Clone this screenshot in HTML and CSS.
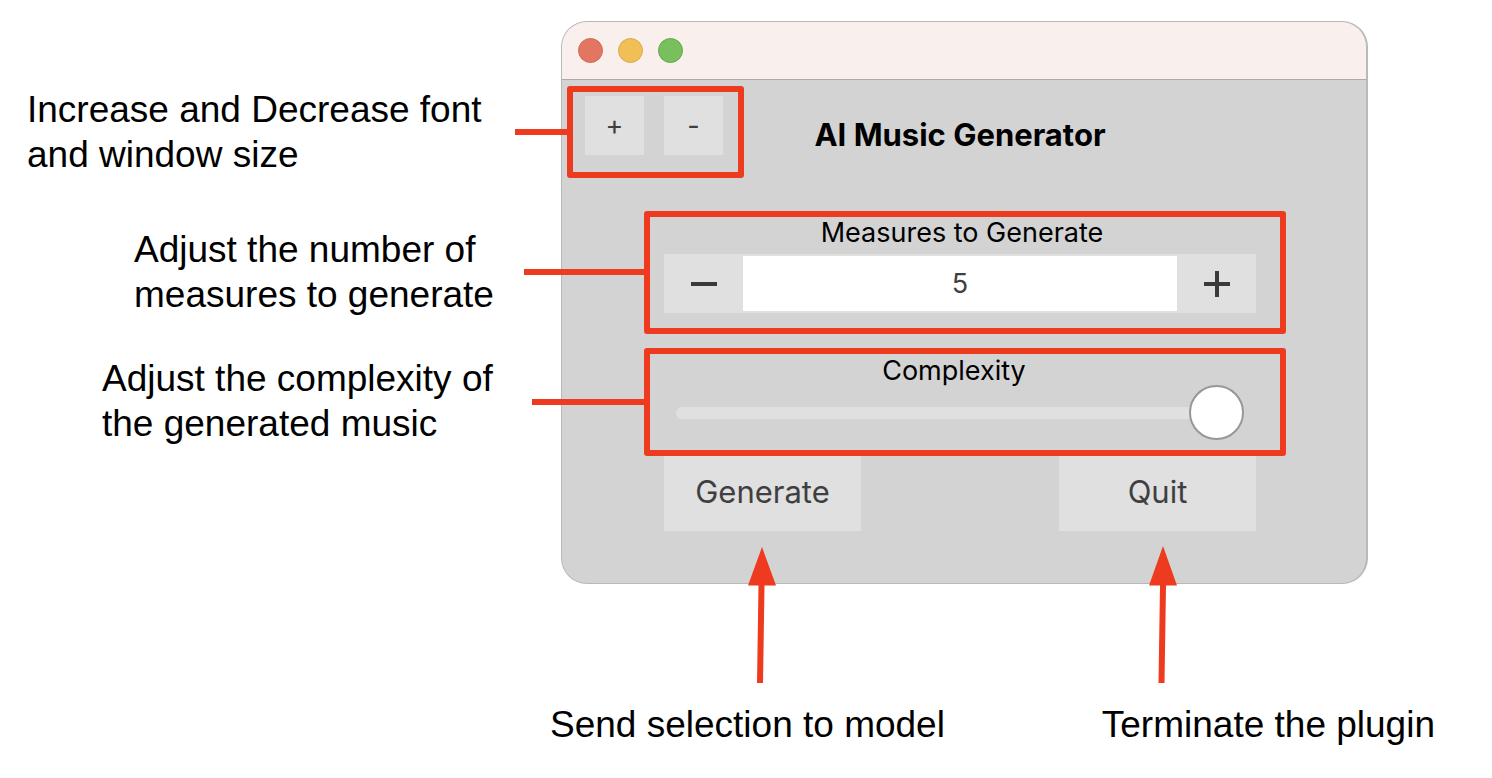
FILE: index.html
```html
<!DOCTYPE html>
<html lang="en">
<head>
<meta charset="utf-8">
<title>AI Music Generator</title>
<link rel="stylesheet" href="styles.css">
</head>
<body>
<main class="guide">
  <section class="notes">
    <p class="note note-size">Increase and Decrease font<br>and window size</p>
    <p class="note note-measures">Adjust the number of<br>measures to generate</p>
    <p class="note note-complexity">Adjust the complexity of<br>the generated music</p>
  </section>

  <section class="window">
    <div class="titlebar">
      <span class="light light-red"></span>
      <span class="light light-yellow"></span>
      <span class="light light-green"></span>
    </div>
    <div class="header">
      <div class="callout callout-size">
        <button class="size-button" type="button" aria-label="Increase size">+</button>
        <button class="size-button" type="button" aria-label="Decrease size">-</button>
      </div>
      <h1 class="title">AI Music Generator</h1>
    </div>
    <div class="controls">
      <div class="callout callout-measures">
        <label class="label" for="measures">Measures to Generate</label>
        <div class="stepper">
          <button class="step" type="button" aria-label="Fewer measures">
            <svg width="26" height="26" viewBox="0 0 26 26"><path d="M0 13H26" stroke="#3a3a3c" stroke-width="4"/></svg>
          </button>
          <input class="value" id="measures" type="text" value="5">
          <button class="step" type="button" aria-label="More measures">
            <svg width="26" height="26" viewBox="0 0 26 26"><path d="M0 13H26M13 0V26" stroke="#3a3a3c" stroke-width="4"/></svg>
          </button>
        </div>
      </div>
      <div class="callout callout-complexity">
        <label class="label" for="complexity">Complexity</label>
        <input class="slider" id="complexity" type="range" min="1" max="10" value="10">
      </div>
      <div class="actions">
        <div class="action">
          <button class="action-button" type="button">Generate</button>
          <svg class="arrow" width="28" height="138" viewBox="0 0 28 138"><path d="M14 1L28 39.500L16.500 39.500L15 137H9L10.500 39.500L0 39.500Z" fill="#ee3a1e"/></svg>
        </div>
        <div class="action">
          <button class="action-button" type="button">Quit</button>
          <svg class="arrow arrow-quit" width="28" height="138" viewBox="0 0 28 138"><path d="M14 0L28 39.500L17 39.500L15.500 137H9.500L11 39.500L0 39.500Z" fill="#ee3a1e"/></svg>
        </div>
      </div>
    </div>
  </section>

  <section class="captions">
    <p class="note">Send selection to model</p>
    <p class="note">Terminate the plugin</p>
  </section>
</main>
</body>
</html>
```
FILE: styles.css
```css
* {
  box-sizing: border-box;
}

body {
  margin: 0;
  background: #fff;
  color: #000;
  font-family: "Liberation Sans", Arial, sans-serif;
}

button,
input {
  margin: 0;
  padding: 0;
  border: 0;
  border-radius: 0;
  color: #3f3f41;
  font-family: Inter, sans-serif;
}

.guide {
  display: grid;
  grid-template-columns: 561px minmax(0, 1fr);
  padding: 21px 124px 0 0;
}

/* Notes beside and below the window */
.notes {
  padding-top: 66px;
}

.note {
  margin: 0;
  font-size: 37px;
  line-height: 45px;
  white-space: nowrap;
}

.note-size {
  margin-left: 27px;
}

.note-measures {
  margin: 50px 0 0 134px;
}

.note-complexity {
  margin: 39px 0 0 102px;
}

.captions {
  grid-column: 1 / -1;
  display: flex;
  justify-content: space-between;
  margin: 118px -67px 0 550px;
}

/* Application window */
.window {
  border: 1px solid #b9b9b9;
  border-right-width: 2px;
  border-radius: 26px;
  background: #d3d3d3;
  font-family: Inter, sans-serif;
}

.titlebar {
  display: flex;
  align-items: center;
  gap: 15px;
  height: 58px;
  padding-left: 16px;
  border-bottom: 1px solid #aaa;
  border-radius: 25px 25px 0 0;
  background: #f9f0ed;
}

.light {
  width: 25px;
  height: 25px;
  border: 1px solid;
  border-radius: 50%;
}

.light-red {
  border-color: #d0695a;
  background: #e27660;
}

.light-yellow {
  border-color: #dba94b;
  background: #f0c056;
}

.light-green {
  border-color: #62a94b;
  background: #77c05b;
}

.header {
  display: grid;
  grid-template-columns: 182px 1fr 190px;
  align-items: center;
  padding-top: 6px;
}

.title {
  margin: 0;
  padding-top: 6px;
  font-size: 31px;
  line-height: 40px;
  font-weight: 700;
  text-align: center;
}

/* Red frame with a connector towards its note */
.callout {
  position: relative;
  border: 6px solid #ee3a1e;
  border-radius: 3px;
}

.callout::before {
  content: "";
  position: absolute;
  right: 100%;
  height: 6px;
  background: #ee3a1e;
}

.callout-size {
  display: flex;
  gap: 20px;
  margin-left: 5px;
  padding: 4px 15px 17px 12px;
}

.callout-size::before {
  top: 37px;
  width: 58px;
}

.size-button {
  width: 59px;
  height: 59px;
  background: #e0e0e0;
  font-size: 27px;
}

.controls {
  margin: 33px 80px 52px 82px;
}

.label {
  display: block;
  font-size: 27px;
  line-height: 28px;
  text-align: center;
}

.callout-measures {
  padding: 2px 24px 15px 14px;
}

.callout-measures .label {
  padding-left: 4px;
}

.callout-measures::before {
  top: 52px;
  width: 126px;
}

.stepper {
  display: flex;
  height: 59px;
  margin-top: 7px;
  padding: 2px 0;
  background: #e0e0e0;
}

.step {
  display: flex;
  flex: none;
  align-items: center;
  justify-content: center;
  width: 79px;
  background: none;
}

.value {
  flex: 1;
  min-width: 0;
  background: #fff;
  font-size: 27px;
  text-align: center;
}

.callout-complexity {
  margin-top: 14px;
  padding: 3px 36px 10px 14px;
}

.callout-complexity::before {
  top: 45px;
  width: 118px;
}

.slider {
  display: block;
  width: calc(100% - 12px);
  height: 55px;
  margin-left: 12px;
  background: none;
  appearance: none;
}

.slider::-webkit-slider-runnable-track {
  height: 12px;
  border-radius: 6px;
  background: #e0e0e0;
}

.slider::-webkit-slider-thumb {
  width: 55px;
  height: 55px;
  margin-top: -22px;
  border: 2px solid #979797;
  border-radius: 50%;
  background: #fff;
  appearance: none;
}

.actions {
  display: flex;
  justify-content: space-between;
  padding: 0 30px 0 20px;
}

.action {
  position: relative;
}

.action-button {
  display: block;
  width: 197px;
  height: 75px;
  padding-bottom: 4px;
  background: #e0e0e0;
  font-size: 31px;
}

.arrow {
  position: absolute;
  top: 90px;
  left: 84px;
}

.arrow-quit {
  left: 90px;
}
```
